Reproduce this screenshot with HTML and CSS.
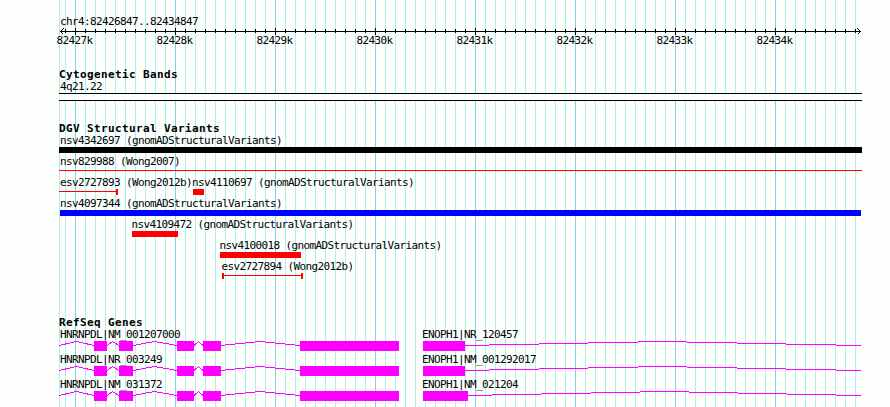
FILE: index.html
```
<!DOCTYPE html>
<html lang="en">
<head>
    <meta charset="UTF-8">
    <title>chr4:82426847..82434847</title>
    <link rel="stylesheet" href="styles.css">
</head>
<body>
    <main class="panel">
        <svg class="ruler" viewBox="59 0 803 66">
            <defs>
                <pattern id="ticks" x="65" y="29" width="10" height="4" patternUnits="userSpaceOnUse">
                    <rect width="1" height="4"/>
                </pattern>
                <!-- exons and introns shared by the HNRNPDL transcripts -->
                <g id="hnrnpdl">
                    <path class="intron" d="M59 16.5L76.5 12.5L94 16.5M107 16.5L112.5 12.5L119 16.5M133 16.5L154.5 12.5L177 16.5M194 16.5L198.5 12.5L203 16.5"/>
                    <path class="intron" d="M221 16.5h4m0-1h10m0-1h10m0-1h10m0-1h10m0 1h10m0 1h10m0 1h10m0 1h5"/>
                    <path class="exon" d="M94 12h13v10h-13zM119 12h14v10h-14zM177 12h17v10h-17zM203 12h18v10h-18zM300 12h99v10h-99z"/>
                </g>
            </defs>
            <text x="60" y="25">chr4:82426847..82434847</text>
            <rect x="60" y="31" width="801" height="1"/>
            <rect x="65" y="29" width="791" height="4" fill="url(#ticks)"/>
            <path class="major" d="M75.5 28v7M175.5 28v7M275.5 28v7M375.5 28v7M475.5 28v7M575.5 28v7M675.5 28v7M775.5 28v7"/>
            <path class="arrow" d="M63.5 28.5l-3 3l3 3M857.5 28.5l3 3l-3 3"/>
            <text x="56.5" y="44">82427k</text>
            <text x="156.5" y="44">82428k</text>
            <text x="256.5" y="44">82429k</text>
            <text x="356.5" y="44">82430k</text>
            <text x="456.5" y="44">82431k</text>
            <text x="556.5" y="44">82432k</text>
            <text x="656.5" y="44">82433k</text>
            <text x="756.5" y="44">82434k</text>
        </svg>

        <section class="track bands">
            <h2>Cytogenetic Bands</h2>
            <svg class="row" viewBox="59 0 803 21">
                <text x="60" y="9">4q21.22</text>
                <rect x="59" y="12" width="803" height="8"/>
                <rect class="band" x="59" y="13" width="803" height="6"/>
            </svg>
        </section>

        <section class="track variants">
            <h2>DGV Structural Variants</h2>
            <svg class="row" viewBox="59 0 803 21">
                <text x="60" y="9">nsv4342697 (gnomADStructuralVariants)</text>
                <rect x="59" y="12" width="803" height="6"/>
            </svg>
            <svg class="row" viewBox="59 0 803 21">
                <text x="60" y="9">nsv829988 (Wong2007)</text>
                <rect class="loss" x="59" y="14" width="803" height="1"/>
            </svg>
            <svg class="row" viewBox="59 0 803 21">
                <text x="60" y="9">esv2727893 (Wong2012b)</text>
                <rect class="loss" x="59" y="14" width="57" height="1"/>
                <rect class="loss" x="116" y="12" width="2" height="6"/>
                <text x="192" y="9">nsv4110697 (gnomADStructuralVariants)</text>
                <rect class="loss" x="193" y="12" width="11" height="6"/>
            </svg>
            <svg class="row" viewBox="59 0 803 21">
                <text x="60" y="9">nsv4097344 (gnomADStructuralVariants)</text>
                <rect class="gain" x="60" y="12" width="801" height="6"/>
            </svg>
            <svg class="row" viewBox="59 0 803 21">
                <text x="131.5" y="9">nsv4109472 (gnomADStructuralVariants)</text>
                <rect class="loss" x="132" y="12" width="46" height="6"/>
            </svg>
            <svg class="row" viewBox="59 0 803 21">
                <text x="219.5" y="9">nsv4100018 (gnomADStructuralVariants)</text>
                <rect class="loss" x="220" y="12" width="81" height="6"/>
            </svg>
            <svg class="row" viewBox="59 0 803 21">
                <text x="221.5" y="9">esv2727894 (Wong2012b)</text>
                <rect class="loss" x="222" y="12" width="2" height="6"/>
                <rect class="loss" x="224" y="14" width="77" height="1"/>
                <rect class="loss" x="301" y="12" width="2" height="6"/>
            </svg>
        </section>

        <section class="track genes">
            <h2>RefSeq Genes</h2>
            <svg class="row" viewBox="59 0 803 25">
                <text x="60" y="9">HNRNPDL|NM_001207000</text>
                <use href="#hnrnpdl"/>
                <text x="422" y="9">ENOPH1|NR_120457</text>
                <path class="intron" d="M465 16.5h24m0-1h50m0-1h49m0-1h50m0-1h49m0 1h50m0 1h49m0 1h50m0 1h25"/>
                <rect class="exon" x="423" y="12" width="42" height="10"/>
            </svg>
            <svg class="row" viewBox="59 0 803 25">
                <text x="60" y="9">HNRNPDL|NR_003249</text>
                <use href="#hnrnpdl"/>
                <text x="422" y="9">ENOPH1|NM_001292017</text>
                <path class="intron" d="M465 16.5h24m0-1h50m0-1h49m0-1h50m0-1h49m0 1h50m0 1h49m0 1h50m0 1h25"/>
                <rect class="exon" x="423" y="12" width="42" height="10"/>
            </svg>
            <svg class="row" viewBox="59 0 803 25">
                <text x="60" y="9">HNRNPDL|NM_031372</text>
                <use href="#hnrnpdl"/>
                <text x="422" y="9">ENOPH1|NM_021204</text>
                <path class="intron" d="M468 16.5h24m0-1h49m0-1h50m0-1h49m0-1h49m0 1h49m0 1h49m0 1h49m0 1h25"/>
                <rect class="exon" x="423" y="12" width="45" height="10"/>
            </svg>
        </section>
    </main>
</body>
</html>
```
FILE: styles.css
```
body {
    margin: 0;
    background: #fdfffc;
    color: #000;
    font-family: "DejaVu Sans Mono", "Liberation Mono", monospace;
    overflow: hidden;
}

/* grid: panel edge, 1k lines, 100bp lines */
.panel {
    width: 803px;
    height: 407px;
    margin-left: 59px;
    background-image:
        linear-gradient(#afeeee, #afeeee),
        linear-gradient(90deg, #87ceeb 1px, transparent 1px),
        linear-gradient(90deg, #afeeee 1px, transparent 1px);
    background-size: 1px 100%, 100px 100%, 10px 100%;
    background-position: 0 0, 16px 0, 6px 0;
    background-repeat: no-repeat, repeat-x, repeat-x;
}

svg {
    display: block;
    width: 803px;
    overflow: visible;
    shape-rendering: crispEdges;
}

text {
    font-size: 11px;
    letter-spacing: -0.62px;
    white-space: pre;
}

h2 {
    height: 15px;
    margin: 0;
    font-size: 11px;
    line-height: 17px;
    font-weight: bold;
    letter-spacing: 0.38px;
}

.ruler {
    height: 66px;
}

.major,
.arrow {
    fill: none;
    stroke: #000;
}

.row {
    height: 21px;
}

.bands {
    height: 54px;
}

.band {
    fill: #fdfffc;
}

.variants {
    height: 194px;
}

.loss {
    fill: #f00;
}

.gain {
    fill: #00f;
}

.genes .row {
    height: 25px;
}

.exon {
    fill: #f0f;
}

.intron {
    fill: none;
    stroke: #f0f;
}
```
